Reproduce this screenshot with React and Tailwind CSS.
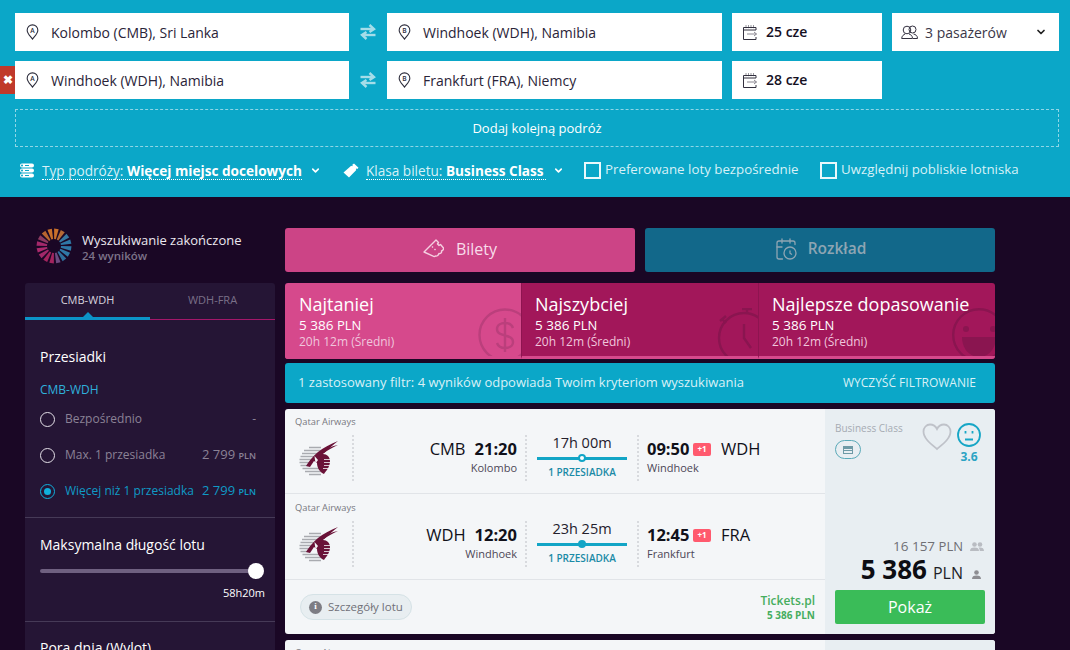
import { ChevronDown, CalendarClock } from 'lucide-react'

function PinIcon({ letter }) {
  return (
    <svg width="13" height="16" viewBox="0 0 14 18" fill="none" className="shrink-0">
      <path d="M7 17C4.5 13.6 1 10.6 1 7a6 6 0 0 1 12 0c0 3.6-3.5 6.600-6 10z" stroke="#2b2b3a" strokeWidth="1.200" />
      <text x="7" y="9.800" textAnchor="middle" fontSize="7.500" fontWeight="600" fill="#2b2b3a">{letter}</text>
    </svg>
  )
}

function SwapIcon() {
  return (
    <svg width="16" height="16" viewBox="0 0 16 16" fill="none" stroke="#a5dde9" strokeWidth="2.400" className="shrink-0">
      <path d="M0.500 5H13" />
      <path d="M9.500 1l4.500 4-4.500 3" />
      <path d="M15.500 11H3" />
      <path d="M6.500 8L2 11l4.500 4" />
    </svg>
  )
}

function CalendarIcon() {
  return (
    <svg width="16" height="17" viewBox="0 0 16 17" fill="none" stroke="#33303f" strokeWidth="1" className="shrink-0">
      <path d="M14 6V3.500H1.500V15.500H14V13" />
      <path d="M1.500 6H14" />
      <path d="M4 1.500v3M6.500 1.500v3M9 1.500v3M11.500 1.500v3" strokeDasharray="1 0.600" />
      <path d="M5 10h9.500M12 8l2.500 2-2.500 2" stroke="#8a8791" />
    </svg>
  )
}

function UsersIcon() {
  return (
    <svg width="17" height="15" viewBox="0 0 17 15" fill="none" stroke="#33303f" strokeWidth="1" className="shrink-0">
      <circle cx="6" cy="5" r="3.800" />
      <circle cx="11.500" cy="4.500" r="3.500" />
      <path d="M0.700 13.500c0-2.500 2-4 3.500-4.500M8 9c1.500.5 3.500 1.500 3.500 4.500H0.700M12.500 9c2 .5 4 1.500 4 4.500h-4.500" />
    </svg>
  )
}

function RouteIcon() {
  return (
    <svg width="16" height="15" viewBox="0 0 16 15" fill="#ffffff" className="shrink-0">
      <path d="M3 0.500h10a2 2 0 0 1 0 4H3a2 2 0 0 1 0-4zM3 5.500h10a2 2 0 0 1 0 4H3a2 2 0 0 1 0-4zM3 10.500h10a2 2 0 0 1 0 4H3a2 2 0 0 1 0-4z" />
      <circle cx="3" cy="2.500" r="1" fill="#0ba7c8" />
      <circle cx="3" cy="7.500" r="1" fill="#0ba7c8" />
      <circle cx="3" cy="12.500" r="1" fill="#0ba7c8" />
      <path d="M6 2.500h4M6 7.500h4M6 12.500h4" stroke="#0ba7c8" />
    </svg>
  )
}

function TagIcon() {
  return (
    <svg width="16" height="15" viewBox="0 0 16 15" fill="#ffffff" className="shrink-0">
      <path d="M11 0.500l4.500 4.200-1.200 1.300-.9-.5-.6.6.5.9L6 14.500 0.500 9.500 8.200 2.700l.9.6.6-.6-.4-.9z" />
    </svg>
  )
}

function Spinner() {
  const colors = ['#c9702b', '#b56a35', '#37779f', '#2f78a6', '#2f78a6', '#2f78a6', '#2f6f9c', '#6e4a80', '#a3245f', '#a3245f', '#a3286a', '#ab2a6c', '#a3286a', '#8c3a60', '#b8652f', '#c9702b']
  const pt = (r, deg) => {
    const a = deg * Math.PI / 180
    return `${(18 + Math.sin(a) * r).toFixed(2)} ${(18 - Math.cos(a) * r).toFixed(2)}`
  }
  return (
    <svg width="36" height="36" viewBox="0 0 36 36" className="shrink-0">
      {colors.map((c, i) => {
        const mid = i * 22.5 + 8
        return (
          <path
            key={i}
            d={`M${pt(7, mid - 7)}L${pt(17.5, mid - 7.5)}L${pt(17.5, mid + 7.5)}L${pt(7, mid + 7)}Z`}
            fill={c}
          />
        )
      })}
    </svg>
  )
}

function QatarLogo() {
  return (
    <svg width="42" height="38" viewBox="0 0 42 38" className="shrink-0">
      <g stroke="#a9abb0" strokeWidth="1.300">
        <path d="M11 8.500h12M6 11.500h17M4 14.500h16M2.500 17.500h14M1.500 20.500h13M1.500 23.500h9M2.500 26.500h8M4.500 29.500h17M7 32.500h17M11 35.500h12" />
      </g>
      <path d="M40 2C32 5 25 9 20 13 15 17 11 22 8 27l4 1 4-6 3 2c0 5 3 9 7 11 2-3 6-7 6-13 0-4-3-7-7-7 5-5 10-9 15-13z" fill="#6a1238" />
      <path d="M40 6c-6 1-12 4-16 7l2 1c4-3 9-6 14-8z" fill="#6a1238" />
      <path d="M16.500 17l3.500 4-2.500 3.500z" fill="#f4f6f8" />
      <g stroke="#f4f6f8" strokeWidth="0.800">
        <path d="M26 20.500h8M26 23.500h8M26 26.500h8M25 29.500h8" />
      </g>
    </svg>
  )
}

function FieldBox({ className, children }) {
  return <div className={`h-[38px] shrink-0 bg-white flex items-center text-[14px] text-[#2a2438] ${className}`}>{children}</div>
}

function SearchRow({ from, to, date, extra }) {
  return (
    <div className="flex">
      <FieldBox className="w-[334px] pl-[11px] gap-[12px]">
        <PinIcon letter="A" />
        <span>{from}</span>
      </FieldBox>
      <div className="w-[38px] shrink-0 flex items-center justify-center">
        <SwapIcon />
      </div>
      <FieldBox className="w-[335px] pl-[11px] gap-[12px]">
        <PinIcon letter="B" />
        <span>{to}</span>
      </FieldBox>
      <FieldBox className="w-[150px] ml-[10px] pl-[10px] gap-[8px] font-semibold text-[13px] text-[#15101f]">
        <CalendarIcon />
        <span className="pb-[1px]">{date}</span>
      </FieldBox>
      {extra}
    </div>
  )
}

function Header() {
  return (
    <div className="bg-[#0ba7c8] h-[197px] pt-[13px] pl-[15px] pr-[11px] relative">
      <div className="flex flex-col gap-[10px]">
        <SearchRow
          from="Kolombo (CMB), Sri Lanka"
          to="Windhoek (WDH), Namibia"
          date="25 cze"
          extra={
            <FieldBox className="w-[167px] ml-[10px] pl-[9px] pr-[12px] gap-[7px] text-[#3b3748]">
              <UsersIcon />
              <span className="flex-1 text-[14px]">3 pasażerów</span>
              <ChevronDown size={12} strokeWidth={3.5} className="text-[#222]" />
            </FieldBox>
          }
        />
        <SearchRow from="Windhoek (WDH), Namibia" to="Frankfurt (FRA), Niemcy" date="28 cze" />
        <div className="h-[38px] border border-dashed border-[#8fd6e6] flex items-center justify-center pt-[1px] text-[13px] text-white">
          Dodaj kolejną podróż
        </div>
      </div>

      {/* remove leg button */}
      <div className="absolute left-0 top-[66px] w-[15px] h-[28px] bg-[#c0392b] flex items-center justify-center text-white text-[12px] font-bold leading-none">
        ✖
      </div>

      <div className="flex items-center h-[46px] pl-[4px] text-[13.6px] text-[#d7f1f7] whitespace-nowrap">
        <RouteIcon />
        <span className="ml-[7px] mt-[2px] w-[260px] border-b border-dotted border-white leading-[17px]">
          Typ podróży: <b className="font-bold text-white">Więcej miejsc docelowych</b>
        </span>
        <ChevronDown size={11} strokeWidth={3.5} className="ml-[8px] text-white" />
        <div className="ml-[22px]"><TagIcon /></div>
        <span className="ml-[7px] mt-[2px] w-[180px] border-b border-dotted border-white leading-[17px]">
          Klasa biletu: <b className="font-bold text-white">Business Class</b>
        </span>
        <ChevronDown size={11} strokeWidth={3.5} className="ml-[7px] text-white" />
        <div className="ml-[20px] w-[17px] h-[17px] border-2 border-[#eaf8fb] bg-[#0ba7c8]" />
        <span className="ml-[4px] w-[195px] text-[13.3px]">Preferowane loty bezpośrednie</span>
        <div className="ml-[20px] w-[17px] h-[17px] border-2 border-[#eaf8fb] bg-[#0ba7c8]" />
        <span className="ml-[4px] text-[13.3px]">Uwzględnij pobliskie lotniska</span>
      </div>
    </div>
  )
}

function Radio({ label, price, active }) {
  return (
    <div className={`flex items-center h-[36px] pr-[4px] text-[12px] ${active ? 'text-[#0f9ac6]' : 'text-[#8b8296]'}`}>
      <div className={`w-[15px] h-[15px] rounded-full border-[1.5px] flex items-center justify-center ${active ? 'border-[#10b0dc]' : 'border-[#e4e0e8]'}`}>
        {active && <div className="w-[7px] h-[7px] rounded-full bg-[#10b0dc]" />}
      </div>
      <span className="ml-[10px] flex-1">{label}</span>
      {price ? (
        <span className="text-[13px]">{price} <span className="text-[9px] font-semibold">PLN</span></span>
      ) : (
        <span>-</span>
      )}
    </div>
  )
}

function Sidebar() {
  return (
    <div className="w-[250px] shrink-0">
      <div className="flex items-center h-[36px] pl-[11px] gap-[10px]">
        <Spinner />
        <div className="pt-[3px]">
          <div className="text-[13px] leading-[16px] text-[#ece8f0]">Wyszukiwanie zakończone</div>
          <div className="text-[11.5px] leading-[15px] font-semibold text-[#7d7389]">24 wyników</div>
        </div>
      </div>

      <div className="mt-[19px] bg-[#251535] rounded-t-[3px]">
        <div className="flex h-[37px] text-[11px]">
          <div className="relative w-1/2 flex items-center justify-center text-[#d8d3de] border-b-[3px] border-[#0c94c8]">
            CMB-WDH
            <div className="absolute bottom-0 left-1/2 -translate-x-1/2 w-0 h-0 border-x-[5px] border-x-transparent border-b-[5px] border-b-[#0c94c8]" />
          </div>
          <div className="w-1/2 flex items-center justify-center text-[#7a7088] border-b border-[#a3176a] pb-[2px]">WDH-FRA</div>
        </div>

        <div className="px-[15px] pt-[27px] pb-[8px] border-b border-[#463a57]">
          <div className="text-[14px] leading-[20px] text-white">Przesiadki</div>
          <div className="mt-[15px] text-[12px] leading-[16px] text-[#2fb1dc]">CMB-WDH</div>
          <div className="mt-[3px]">
            <Radio label="Bezpośrednio" />
            <Radio label="Max. 1 przesiadka" price="2 799" />
            <Radio label="Więcej niż 1 przesiadka" price="2 799" active />
          </div>
        </div>

        <div className="px-[15px] pt-[17px] h-[104px] border-b border-[#463a57]">
          <div className="text-[14px] leading-[20px] text-white">Maksymalna długość lotu</div>
          <div className="relative mt-[14px] h-[4px] rounded-full bg-[#6f6080]">
            <div className="absolute -right-[4px] -top-[6px] w-[16px] h-[16px] rounded-full bg-white" />
          </div>
          <div className="mt-[12px] text-[11px] leading-[16px] text-white text-right -mr-[5px]">58h20m</div>
        </div>

        <div className="px-[15px] pt-[16px] h-[200px]">
          <div className="text-[14px] leading-[20px] text-white">Pora dnia (Wylot)</div>
        </div>
      </div>
    </div>
  )
}

function SortTab({ title, active, icon }) {
  return (
    <div className={`relative overflow-hidden pt-[8px] border-b-[3px] border-[#d6498c] ${active ? 'w-[236px] bg-[#d6498c] pl-[14px]' : 'w-[237px] bg-[#a2175a] border-l border-l-[#8e1450] pl-[13px]'}`}>
      <div className="text-[18px] leading-[26px] text-white">{title}</div>
      <div className="text-[13.5px] leading-[16px] text-white">5 386 <span className="text-[13px]">PLN</span></div>
      <div className="text-[12px] leading-[18px] text-[#f0c6dc]">20h 12m (Średni)</div>
      {icon}
    </div>
  )
}

function Airline({ code, time, city, duration, arr, arrCity, arrCode, hollow, first }) {
  return (
    <div className={`border-b border-[#e1e4e8] pl-[10px] ${first ? 'h-[85px] pt-[6px]' : 'h-[86px] pt-[7px]'}`}>
      <div className="text-[9.3px] leading-[13px] text-[#77777f]">Qatar Airways</div>
      <div className="flex h-[46px] mt-[7px] relative">
        <div className="w-[59px] border-r-2 border-dotted border-[#d8dade] flex items-center pl-[3px]">
          <QatarLogo />
        </div>
        <div className="w-[173px] border-r-2 border-dotted border-[#d8dade] pr-[8px] text-right">
          <div className="text-[16.5px] leading-[22px] mt-[3px] text-[#11111a]">
            {code}<b className="ml-[9px] font-bold">{time}</b>
          </div>
          <div className="text-[11px] leading-[15px] text-[#4c4656]">{city}</div>
        </div>
        <div className="w-[112px] border-r-2 border-dotted border-[#d8dade] flex flex-col items-center">
          <div className="text-[14.5px] leading-[18px] -mt-[1px] text-[#24202c]">{duration}</div>
          <div className="relative w-[90px] h-[3px] bg-[#12a5c6] mt-[5px]">
            <div className={`absolute left-1/2 -translate-x-1/2 -top-[3px] w-[8px] h-[8px] rounded-full border-2 border-[#12a5c6] ${hollow ? 'bg-white' : 'bg-[#12a5c6]'}`} />
          </div>
          <div className="text-[10px] leading-[12px] mt-[6px] font-semibold text-[#1a8aa6]">1 PRZESIADKA</div>
        </div>
        <div className="pl-[8px]">
          <div className="flex items-center h-[22px] mt-[3px] text-[16.5px] text-[#11111a]">
            <b className="w-[46px] font-bold">{arr}</b>
            <span className="w-[18px] h-[13px] rounded-[2px] bg-[#ff5a6e] text-white text-[8px] font-bold flex items-center justify-center">+1</span>
            <span className="ml-[10px]">{arrCode}</span>
          </div>
          <div className="text-[11px] leading-[15px] text-[#4c4656]">{arrCity}</div>
        </div>
      </div>
    </div>
  )
}

function PeopleIcon({ double }) {
  return (
    <svg width={double ? 14 : 9} height="9" viewBox={double ? '0 0 14 9' : '0 0 9 9'} fill={double ? '#b9bcc2' : '#8d8d92'} className="block">
      <circle cx="4.5" cy="2.5" r="2.3" />
      <path d="M0 9c0-2.500 1.500-3.600 4.500-3.600S9 6.500 9 9z" />
      {double && <circle cx="10" cy="2.5" r="2.3" />}
      {double && <path d="M10 5.400c2.500 0 4 1 4 3.600H9.800c0-1.500-.5-2.500-1.300-3.200.5-.3 1-.4 1.500-.4z" />}
    </svg>
  )
}

function FlightCard() {
  return (
    <div className="flex h-[225px] rounded-[3px] overflow-hidden bg-[#f4f6f8]">
      <div className="w-[540px] flex flex-col">
        <Airline first code="CMB" time="21:20" city="Kolombo" duration="17h 00m" arr="09:50" arrCode="WDH" arrCity="Windhoek" hollow />
        <Airline code="WDH" time="12:20" city="Windhoek" duration="23h 25m" arr="12:45" arrCode="FRA" arrCity="Frankfurt" />
        <div className="flex-1 flex items-center justify-between pl-[15px] pr-[10px]">
          <div className="flex items-center h-[26px] px-[8px] gap-[6px] rounded-full bg-[#e8eef1] border border-[#d5e2e6] text-[11.5px] text-[#707078]">
            <span className="w-[13px] h-[13px] rounded-full bg-[#7d7d84] text-white text-[9px] font-bold flex items-center justify-center font-['Liberation_Serif',serif]">i</span>
            Szczegóły lotu
          </div>
          <div className="text-right">
            <div className="text-[12px] leading-[16px] font-semibold text-[#46ad5e]">Tickets.pl</div>
            <div className="text-[10px] leading-[13px] font-bold text-[#46ad5e]">5 386 PLN</div>
          </div>
        </div>
      </div>

      <div className="w-[170px] bg-[#e8eef2] flex flex-col px-[10px] pb-[10px] pt-[12px]">
        <div className="flex justify-between">
          <div>
            <div className="text-[10px] leading-[14px] text-[#a6abb3]">Business Class</div>
            <div className="mt-[5px] w-[26px] h-[19px] rounded-full border border-[#5aa9b8] flex items-center justify-center">
              <svg width="10" height="8" viewBox="0 0 10 8" fill="#6e9aa6"><path d="M0 0h10v8H0zM1 3v1h8V3zM1 5v2h8V5z" fillRule="evenodd" /></svg>
            </div>
          </div>
          <div className="flex gap-[5px] mr-[4px] mt-[2px] items-start">
            <svg width="30" height="28" viewBox="0 0 30 28" fill="none" stroke="#bfc2c9" strokeWidth="1.8">
              <path d="M15 26C9 21 1.500 15.500 1.500 8.500 1.500 4.500 4.500 1.500 8 1.500c3 0 5.500 1.500 7 4.500 1.500-3 4-4.500 7-4.500 3.500 0 6.500 3 6.500 7 0 7-7.500 12.500-13.500 17.500z" />
            </svg>
            <div className="flex flex-col items-center">
              <svg width="24" height="24" viewBox="0 0 24 24" fill="none" stroke="#17a6c6" strokeWidth="1.8">
                <circle cx="12" cy="12" r="11" />
                <path d="M8 16.500h8" />
                <path d="M8.500 8v2.500M15.500 8v2.500" />
              </svg>
              <div className="text-[12px] leading-[15px] mt-[2px] font-bold text-[#2ba3c4]">3.6</div>
            </div>
          </div>
        </div>
        <div className="mt-auto flex items-center justify-end gap-[7px] mr-[1px] text-[13.5px] leading-[16px] text-[#6f6f74]">
          <span>16 157 <span className="text-[13px]">PLN</span></span>
          <PeopleIcon double />
        </div>
        <div className="flex items-baseline justify-end mt-[1px] h-[28px]">
          <span className="text-[26px] leading-[28px] font-bold text-[#0d0d12]">5 386</span>
          <span className="ml-[6px] text-[16px] leading-[28px] text-[#1e1e28]">PLN</span>
          <span className="ml-[9px] mr-[4px] leading-none"><PeopleIcon /></span>
        </div>
        <div className="mt-[7px] h-[34px] rounded-[2px] bg-[#3abc58] flex items-center justify-center text-[16px] text-white">Pokaż</div>
      </div>
    </div>
  )
}

function Results() {
  return (
    <div className="w-[710px] shrink-0">
      <div className="flex gap-[10px]">
        <div className="flex-1 h-[44px] rounded-[3px] bg-[#cc4486] flex items-center justify-center gap-[12px] pb-[2px] text-[16px] font-medium text-[#f8dcea]">
          <svg width="21" height="21" viewBox="0 0 21 21" fill="none" stroke="#f5cfe1" strokeWidth="1.4" strokeLinejoin="round">
            <path d="M1 13L13 1l2.500 2.500-1 1.500 1.500 1.500 1.500-1L20.500 9c.5 2-1 2.500-2 3 .5 1.500-1 3-2.500 2.500-.5 1.500-2 3-3.500 2.500-1 1-2 .5-3-.2z" />
            <path d="M9 7.500l1 1M11.500 10l1 1" />
          </svg>
          Bilety
        </div>
        <div className="flex-1 h-[44px] rounded-[3px] bg-[#12688a] flex items-center justify-center gap-[10px] pb-[2px] text-[15.5px] font-semibold text-[#8ea5b3]">
          <CalendarClock size={24} strokeWidth={1.3} className="text-[#8ea5b3]" />
          Rozkład
        </div>
      </div>

      <div className="flex h-[76px] mt-[11px] rounded-[3px] overflow-hidden">
        <SortTab
          title="Najtaniej"
          active
          icon={
            <svg width="54" height="54" viewBox="0 0 54 54" fill="none" stroke="#bb3f7c" strokeWidth="2.4" className="absolute -right-[11px] top-[25px]">
              <circle cx="27" cy="27" r="25.5" />
              <path d="M35 20c-1-3-4-5-8-5s-8 2-8 6c0 9 16 4 16 13 0 4-4 6-8 6s-7-2-8-5M27 10v34" />
            </svg>
          }
        />
        <SortTab
          title="Najszybciej"
          icon={
            <svg width="54" height="58" viewBox="0 0 54 58" fill="none" stroke="#8a1550" strokeWidth="2.4" className="absolute -right-[13px] top-[25px]">
              <circle cx="27" cy="30" r="25" />
              <path d="M25 1h10M30 1v4M9 15l-4-4M3 13l6-5M27 16v14l7 10" />
            </svg>
          }
        />
        <SortTab
          title="Najlepsze dopasowanie"
          icon={
            <svg width="54" height="54" viewBox="0 0 54 54" fill="none" className="absolute -right-[11px] top-[25px]">
              <circle cx="27" cy="27" r="25.8" stroke="#8a1550" strokeWidth="2.4" />
              <circle cx="14" cy="21" r="3" fill="#8a1550" />
              <circle cx="41" cy="21" r="3" fill="#8a1550" />
              <path d="M10 29h34c0 12-8 20-17 20s-17-8-17-20z" fill="#8a1550" />
            </svg>
          }
        />
      </div>

      <div className="flex items-center justify-between h-[40px] mt-[4px] pl-[13px] pr-[19px] rounded-[3px] bg-[#0ba7c8] text-[13px] text-[#d9f1f7]">
        <span>1 zastosowany filtr: 4 wyników odpowiada Twoim kryteriom wyszukiwania</span>
        <span className="text-[12px]">WYCZYŚĆ FILTROWANIE</span>
      </div>

      <div className="mt-[6px] flex flex-col gap-[6px]">
        <FlightCard />
        <FlightCard />
      </div>
    </div>
  )
}

export default function App() {
  return (
    <div className="h-[650px] overflow-hidden bg-[#1a0725] font-['Open_Sans',sans-serif]">
      <Header />
      <div className="flex gap-[10px] pl-[25px] pt-[31px]">
        <Sidebar />
        <Results />
      </div>
    </div>
  )
}
